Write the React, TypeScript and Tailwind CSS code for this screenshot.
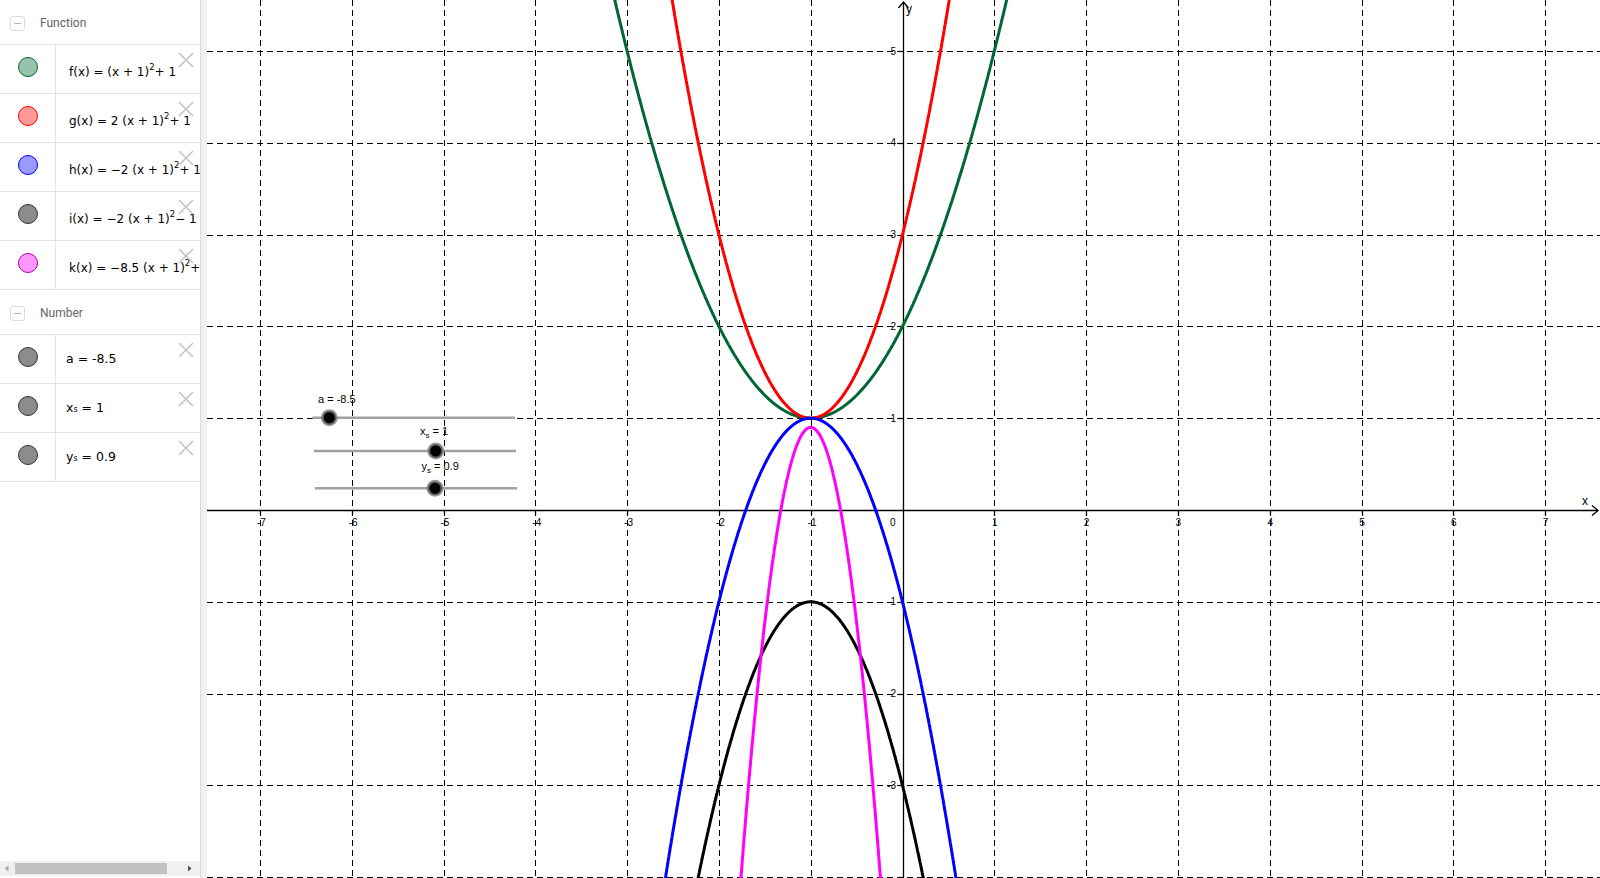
import React from "react"

// graph scale (px per unit) and origin, in page coordinates
const U = 91.8
const OX = 902.5
const OY = 510
const px = (x: number) => OX + U * x
const py = (y: number) => OY - U * y

function curve(f: (x: number) => number) {
  let d = ""
  for (let i = 0; i <= 3400; i++) {
    const x = -8.5 + i * 0.005
    const y = f(x)
    if (y > 5.9 || y < -4.4) continue
    d += (d ? "L" : "M") + px(x).toFixed(1) + " " + py(y).toFixed(1)
  }
  return d
}

const curves = [
  { f: (x: number) => (x + 1) ** 2 + 1, color: "#006633" },
  { f: (x: number) => 2 * (x + 1) ** 2 + 1, color: "#ff0000" },
  { f: (x: number) => -2 * (x + 1) ** 2 + 1, color: "#0000ff" },
  { f: (x: number) => -2 * (x + 1) ** 2 - 1, color: "#000000" },
  { f: (x: number) => -8.5 * (x + 1) ** 2 + 0.9, color: "#ff00ff" },
]

function CloseX() {
  return (
    <svg className="absolute left-[178px] top-[7px]" width="16" height="16" viewBox="0 0 16 16">
      <path d="M1 1 L15 15 M15 1 L1 15" stroke="#c4c4c4" strokeWidth="1.6" fill="none" />
    </svg>
  )
}

function Header({ title }: { title: string }) {
  return (
    <div className="flex h-[45px] items-center border-b border-[#e2e2e2] pt-[2px]">
      <div className="ml-[10px] flex h-[15px] w-[15px] items-center justify-center rounded-[3px] border border-[#dcdcdc]">
        <div className="h-px w-[7px] bg-[#b5b5b5]" />
      </div>
      <span className="ml-[15px] text-[12px] text-[#666]" style={{ fontFamily: "Roboto, sans-serif" }}>
        {title}
      </span>
    </div>
  )
}

function Row({ dot, children, fn }: { dot: string; children: React.ReactNode; fn?: boolean }) {
  return (
    <div className="relative flex h-[49px] border-b border-[#e2e2e2]">
      <div className="flex w-[56px] shrink-0 items-center justify-center border-r border-[#e2e2e2] pb-[4px]">
        <span className={"block h-[20px] w-[20px] rounded-full border " + dot} />
      </div>
      <div
        className={
          "flex items-center whitespace-nowrap text-black " +
          (fn ? "pl-[13px] pt-[6px] text-[12px]" : "pl-[10px] text-[12.5px]")
        }
        style={{ fontFamily: "'DejaVu Sans', sans-serif" }}
      >
        {children}
      </div>
      <CloseX />
    </div>
  )
}

function Sup({ children }: { children: React.ReactNode }) {
  return <sup className="relative -top-[5px] text-[8.5px]">{children}</sup>
}

function Panel() {
  return (
    <div className="flex h-full w-[201px] shrink-0 flex-col overflow-hidden border-r border-[#d9d9d9] bg-white">
      <Header title="Function" />
      <Row fn dot="bg-[#99c2ad] border-[#006633]">
        f(x) = (x + 1)<Sup>2</Sup> + 1
      </Row>
      <Row fn dot="bg-[#ff9999] border-[#ff0000]">
        g(x) = 2 (x + 1)<Sup>2</Sup> + 1
      </Row>
      <Row fn dot="bg-[#9999ff] border-[#0000ff]">
        h(x) = −2 (x + 1)<Sup>2</Sup> + 1
      </Row>
      <Row fn dot="bg-[#8c8c8c] border-[#333]">
        i(x) = −2 (x + 1)<Sup>2</Sup> − 1
      </Row>
      <Row fn dot="bg-[#ff99ff] border-[#b000b0]">
        k(x) = −8.5 (x + 1)<Sup>2</Sup> + 0.9
      </Row>
      <Header title="Number" />
      <Row dot="bg-[#8c8c8c] border-[#333]">a = -8.5</Row>
      <Row dot="bg-[#8c8c8c] border-[#333]">
        x<sub className="text-[8px]">s</sub>&nbsp;= 1
      </Row>
      <Row dot="bg-[#8c8c8c] border-[#333]">
        y<sub className="text-[8px]">s</sub>&nbsp;= 0.9
      </Row>
      <div className="mt-auto mb-[2px] flex h-[15px] items-center bg-[#f0f0f0]">
        <svg width="15" height="15" viewBox="0 0 15 15">
          <path d="M8.5 4.5 L5 7.5 L8.5 10.5 Z" fill="#a3a3a3" />
        </svg>
        <div className="h-[11px] w-[152px] bg-[#c1c1c1]" />
        <div className="flex-1" />
        <svg width="15" height="15" viewBox="0 0 15 15" className="mr-[3px]">
          <path d="M6 4.5 L9.5 7.5 L6 10.5 Z" fill="#505050" />
        </svg>
      </div>
    </div>
  )
}

function Slider({ x1, x2, y, at }: { x1: number; x2: number; y: number; at: number }) {
  return (
    <g>
      <line x1={x1} x2={x2} y1={y} y2={y} stroke="#a0a0a0" strokeWidth="2.5" />
      <circle cx={at} cy={y} r="7" fill="#000" stroke="#7a7a7a" strokeOpacity="0.75" strokeWidth="3" />
    </g>
  )
}

function Graph() {
  const xs = [-7, -6, -5, -4, -3, -2, -1, 1, 2, 3, 4, 5, 6, 7]
  const ys = [-4, -3, -2, -1, 1, 2, 3, 4, 5]
  const ax = Math.round(OX) + 0.5
  const ay = OY + 0.5
  return (
    <div className="relative h-full flex-1 bg-white">
      <svg width="1393" height="878" viewBox="207 0 1393 878" className="block">
        <g stroke="#000" strokeWidth="1" strokeDasharray="6 4" shapeRendering="crispEdges">
          {xs.map((k) => (
            <line key={"v" + k} x1={Math.round(px(k)) + 0.5} x2={Math.round(px(k)) + 0.5} y1={0} y2={878} />
          ))}
          {ys.map((k) => (
            <line key={"h" + k} x1={207} x2={1600} y1={Math.round(py(k)) + 0.5} y2={Math.round(py(k)) + 0.5} />
          ))}
        </g>
        <g stroke="#000" strokeWidth="1.3" fill="none">
          <line x1={207} x2={1598} y1={ay} y2={ay} />
          <path d={`M1592 ${ay - 5} L1598 ${ay} L1592 ${ay + 5}`} />
          <line x1={ax} x2={ax} y1={2} y2={878} />
          <path d={`M${ax - 5} 8 L${ax} 2 L${ax + 5} 8`} />
          {xs.map((k) => (
            <line key={"tx" + k} x1={Math.round(px(k)) + 0.5} x2={Math.round(px(k)) + 0.5} y1={ay} y2={ay + 5} />
          ))}
          {ys.map((k) => (
            <line key={"ty" + k} x1={ax - 5} x2={ax} y1={Math.round(py(k)) + 0.5} y2={Math.round(py(k)) + 0.5} />
          ))}
        </g>
        <g fontFamily="'Liberation Sans', Arial, sans-serif" fontSize="10" fill="#000">
          {xs.map((k) =>
            k < 0 ? (
              <text key={"lx" + k} x={px(k) - 3} y={526}>
                -{-k}
              </text>
            ) : (
              <text key={"lx" + k} x={px(k) + 0.5} y={526} textAnchor="middle">
                {k}
              </text>
            )
          )}
          {ys
            .filter((k) => k > -4)
            .map((k) => (
              <text key={"ly" + k} x={896} y={py(k) + 3.5} textAnchor="end">
                {k < 0 ? "-" + -k : k}
              </text>
            ))}
          <text x={890} y={526}>0</text>
          <text x={1582} y={505} fontSize="12">x</text>
          <text x={906} y={13} fontSize="12">y</text>
        </g>
        <g fill="none" strokeWidth="3" strokeLinejoin="round">
          {curves.map((c, i) => (
            <path key={i} d={curve(c.f)} stroke={c.color} />
          ))}
        </g>
        <Slider x1={312.5} x2={515} y={417.7} at={329.3} />
        <Slider x1={314} x2={516} y={451} at={435.7} />
        <Slider x1={315} x2={517} y={488.3} at={435} />
        <g fontFamily="'Liberation Sans', Arial, sans-serif" fontSize="11" fill="#000">
          <text x={318} y={403}>a = -8.5</text>
          <text x={420} y={435}>
            x<tspan fontSize="8" dy="3">s</tspan>
            <tspan dy="-3"> = 1</tspan>
          </text>
          <text x={421.5} y={470}>
            y<tspan fontSize="8" dy="3">s</tspan>
            <tspan dy="-3"> = 0.9</tspan>
          </text>
        </g>
      </svg>
    </div>
  )
}

export default function App() {
  return (
    <div className="flex h-[878px] w-[1600px] overflow-hidden bg-white">
      <Panel />
      <div className="h-full w-[6px] shrink-0 bg-[#f2f2f2]" />
      <Graph />
    </div>
  )
}
